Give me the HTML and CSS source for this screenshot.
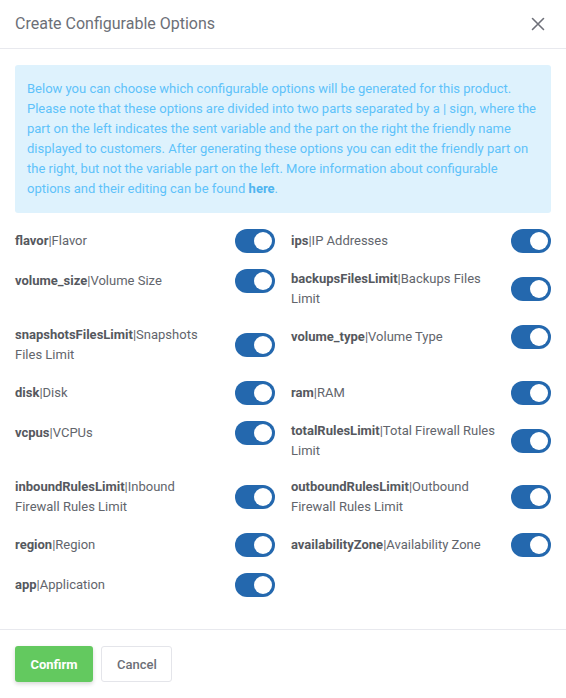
FILE: index.html
```html
<!DOCTYPE html>
<html>
<head>
<meta charset="utf-8">
<link rel="stylesheet" href="styles.css">
</head>
<body>
<div class="modal">
  <div class="modal-header">
    <h2 class="modal-title">Create Configurable Options</h2>
    <button class="close" aria-label="Close">
      <svg width="14" height="14" viewBox="0 0 14 14"><path d="M1.5 1.5 L12.5 12.5 M12.5 1.5 L1.5 12.5" stroke="#6e7079" stroke-width="1.6" stroke-linecap="round" fill="none"/></svg>
    </button>
  </div>
  <div class="modal-body">
    <div class="alert">Below you can choose which configurable options will be generated for this product. Please note that these options are divided into two parts separated by a | sign, where the part on the left indicates the sent variable and the part on the right the friendly name displayed to customers. After generating these options you can edit the friendly part on the right, but not the variable part on the left. More information about configurable options and their editing can be found <a class="alert-link" href="#">here</a>.</div>
    <div class="options">
      <div class="option"><span class="label"><b>flavor</b>|Flavor</span><span class="switch"></span></div>
      <div class="option"><span class="label"><b>ips</b>|IP Addresses</span><span class="switch"></span></div>
      <div class="option"><span class="label"><b>volume_size</b>|Volume Size</span><span class="switch"></span></div>
      <div class="option"><span class="label"><b>backupsFilesLimit</b>|Backups Files Limit</span><span class="switch"></span></div>
      <div class="option"><span class="label"><b>snapshotsFilesLimit</b>|Snapshots Files Limit</span><span class="switch"></span></div>
      <div class="option"><span class="label"><b>volume_type</b>|Volume Type</span><span class="switch"></span></div>
      <div class="option"><span class="label"><b>disk</b>|Disk</span><span class="switch"></span></div>
      <div class="option"><span class="label"><b>ram</b>|RAM</span><span class="switch"></span></div>
      <div class="option"><span class="label"><b>vcpus</b>|VCPUs</span><span class="switch"></span></div>
      <div class="option"><span class="label"><b>totalRulesLimit</b>|Total Firewall Rules Limit</span><span class="switch"></span></div>
      <div class="option"><span class="label"><b>inboundRulesLimit</b>|Inbound Firewall Rules Limit</span><span class="switch"></span></div>
      <div class="option"><span class="label"><b>outboundRulesLimit</b>|Outbound Firewall Rules Limit</span><span class="switch"></span></div>
      <div class="option"><span class="label"><b>region</b>|Region</span><span class="switch"></span></div>
      <div class="option"><span class="label"><b>availabilityZone</b>|Availability Zone</span><span class="switch"></span></div>
      <div class="option"><span class="label"><b>app</b>|Application</span><span class="switch"></span></div>
    </div>
  </div>
  <div class="modal-footer">
    <button class="btn btn-confirm">Confirm</button>
    <button class="btn btn-cancel">Cancel</button>
  </div>
</div>
</body>
</html>
```
FILE: styles.css
```css
html, body {
  margin: 0;
  padding: 0;
  background: #ffffff;
}
body {
  font-family: Roboto, "Liberation Sans", sans-serif;
  color: #5d6068;
}
.modal {
  width: 566px;
  height: 698px;
  display: flex;
  flex-direction: column;
}
.modal-header {
  height: 48px;
  border-bottom: 1px solid #e8e9ee;
  display: flex;
  align-items: center;
  justify-content: space-between;
  padding: 0 20px 0 15px;
}
.modal-title {
  margin: 0;
  font-size: 16px;
  font-weight: 400;
  color: #6c6f77;
  line-height: 20px;
}
.close {
  border: 0;
  background: none;
  padding: 0;
  width: 16px;
  height: 16px;
  display: flex;
  align-items: center;
  justify-content: center;
  cursor: pointer;
}
.modal-body {
  flex: 1;
  padding: 16px 15px 0;
}
.alert {
  background: #def2fd;
  color: #5ec2fa;
  font-size: 13px;
  line-height: 20px;
  padding: 14px 12px;
  border-radius: 3px;
}
.alert-link {
  color: #4fb5f0;
  font-weight: 700;
  text-decoration: none;
}
.options {
  margin-top: 16px;
  display: grid;
  grid-template-columns: 1fr 1fr;
  column-gap: 16px;
  row-gap: 16px;
  align-items: start;
}
.option {
  display: flex;
  align-items: center;
  justify-content: space-between;
}
.label {
  flex: 1;
  margin-right: 16px;
  font-size: 13px;
  line-height: 20px;
  color: #62656c;
}
.label b {
  font-weight: 700;
  color: #55585e;
}
.switch {
  flex-shrink: 0;
  width: 40px;
  height: 24px;
  border-radius: 12px;
  background: #2468ae;
  position: relative;
}
.switch::after {
  content: "";
  position: absolute;
  top: 3px;
  right: 3px;
  width: 18px;
  height: 18px;
  border-radius: 50%;
  background: #ffffff;
}
.modal-footer {
  border-top: 1px solid #e8e9ee;
  padding: 16px 15px;
  display: flex;
  gap: 8px;
}
.btn {
  height: 36px;
  padding: 0 15px;
  font-family: Roboto, "Liberation Sans", sans-serif;
  font-size: 13px;
  border-radius: 3px;
  cursor: pointer;
}
.btn-confirm {
  width: 78px;
  background: #63c95f;
  color: #ffffff;
  border: 0;
  font-weight: 700;
  box-shadow: 0 2px 4px rgba(0, 0, 0, 0.16);
}
.btn-cancel {
  width: 71px;
  background: #ffffff;
  color: #6c6f77;
  border: 1px solid #e4e5ea;
  font-weight: 500;
}
```
